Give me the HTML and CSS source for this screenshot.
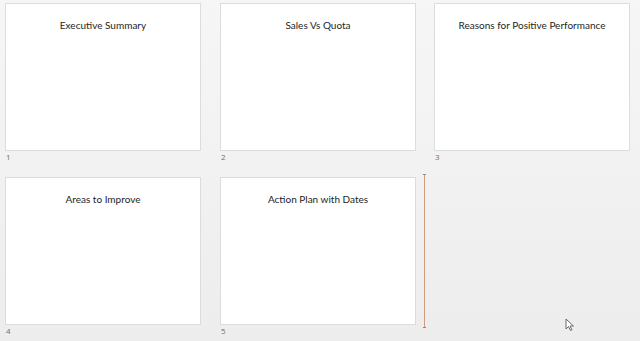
FILE: index.html
```html
<!DOCTYPE html>
<html>
<head>
<meta charset="utf-8">
<link rel="stylesheet" href="styles.css">
</head>
<body>
<div class="sorter">
  <div class="cell"><div class="slide"><div class="title">Executive Summary</div></div><div class="num">1</div></div>
  <div class="cell"><div class="slide"><div class="title">Sales Vs Quota</div></div><div class="num">2</div></div>
  <div class="cell"><div class="slide"><div class="title">Reasons for Positive Performance</div></div><div class="num">3</div></div>
  <div class="cell"><div class="slide"><div class="title">Areas to Improve</div></div><div class="num">4</div></div>
  <div class="cell"><div class="slide"><div class="title">Action Plan with Dates</div></div><div class="num">5</div></div>
  <div class="cell"><div class="marker"></div></div>
</div>
<svg class="cursor" width="12" height="14" viewBox="0 0 12 14">
  <path d="M1 1 L1 11 L3.5 8.5 L5.5 12.5 L7 11.8 L5 8 L8.5 8 Z" fill="#fff" stroke="#6a6a6a" stroke-width="1"/>
</svg>
</body>
</html>
```
FILE: styles.css
```css
html, body {
  margin: 0;
  height: 100%;
}
body {
  background: linear-gradient(#f6f6f6, #ededed);
  font-family: Lato, "Open Sans", sans-serif;
  position: relative;
  overflow: hidden;
}
.sorter {
  display: grid;
  grid-template-columns: 215px 214px 214px;
  grid-auto-rows: 174px;
  padding: 3px 0 0 5px;
}
.slide {
  width: 196px;
  height: 148px;
  box-sizing: border-box;
  background: #fff;
  border: 1px solid #dcdcdc;
}
.title {
  text-align: center;
  font-size: 10px;
  color: #1e1e1e;
  padding-top: 14px;
  line-height: 14px;
}
.num {
  font-family: "Open Sans", sans-serif;
  font-size: 8px;
  color: #6e6e6e;
  padding: 1px 0 0 1px;
  line-height: 10px;
}
.marker {
  margin: -3px 0 0 -10px;
  width: 1px;
  height: 154px;
  background: #cf9c7e;
  position: relative;
}
.marker::before, .marker::after {
  content: "";
  position: absolute;
  left: -1px;
  width: 3px;
  height: 1px;
  background: #8a8a8a;
}
.marker::before { top: 0; }
.marker::after { bottom: 0; }
.cursor {
  position: absolute;
  left: 565px;
  top: 318px;
}
```
